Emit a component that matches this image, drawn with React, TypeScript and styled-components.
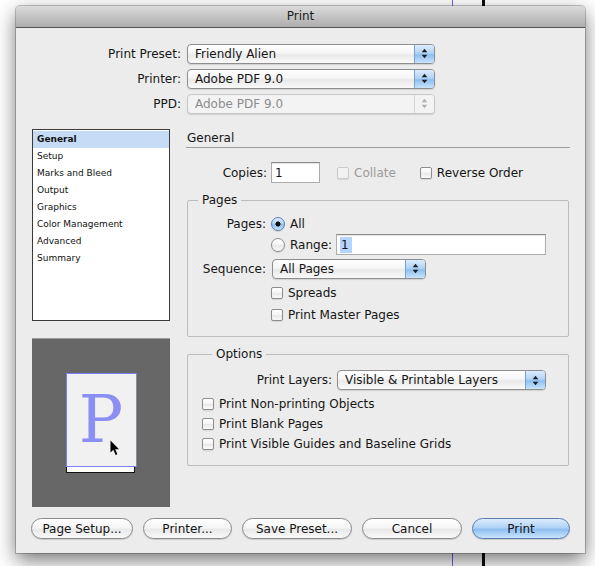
import React from 'react';
import styled, { createGlobalStyle } from 'styled-components';

const GlobalStyle = createGlobalStyle`
  html, body {
    margin: 0;
    padding: 0;
  }
  body {
    font-family: "DejaVu Sans", "Liberation Sans", sans-serif;
    font-size: 12px;
    color: #151515;
  }
`;

const aqua = 'linear-gradient(#dcecfd, #b0d3f6 45%, #8ebff0 55%, #c9e4fc)';
const glass = 'linear-gradient(#ffffff, #f5f5f5 45%, #e9e9e9 55%, #f9f9f9)';

const Arrows = ({ color }: { color: string }) => (
  <svg width='7' height='11' viewBox='0 0 7 11'>
    <path d='M3.5 0.8 L6.3 4.2 L0.7 4.2 Z' fill={color} />
    <path d='M0.7 6.8 L6.3 6.8 L3.5 10.2 Z' fill={color} />
  </svg>
);

const Cursor = () => (
  <CursorMark width='10' height='16' viewBox='0 0 10 16'>
    <path d='M0.5 0.5 L0.5 12.5 L3.4 9.8 L5.6 15 L7.4 14.2 L5.2 9.2 L9 9.2 Z' fill='#000' />
  </CursorMark>
);

const PopUp = ({ value, disabled, width }: { value: string; disabled?: boolean; width?: number }) => (
  <PopupBox $disabled={disabled} $width={width}>
    <PopupValue>{value}</PopupValue>
    <Stepper $disabled={disabled}>
      <Arrows color={disabled ? '#b0b0b0' : '#1c1c1c'} />
    </Stepper>
  </PopupBox>
);

const Check = ({ label, disabled }: { label: string; disabled?: boolean }) => (
  <CheckRow $disabled={disabled}>
    <CheckBox $disabled={disabled} />
    {label}
  </CheckRow>
);

const Radio = ({ label, checked }: { label: string; checked?: boolean }) => (
  <CheckRow>
    <RadioDot $checked={checked} />
    {label}
  </CheckRow>
);

const sections = [
  'General',
  'Setup',
  'Marks and Bleed',
  'Output',
  'Graphics',
  'Color Management',
  'Advanced',
  'Summary',
];

const App = () => {
  return (
    <Desk>
      <GlobalStyle />
      <Window>
        <TitleBar>Print</TitleBar>
        <Content>
          <Presets>
            <FormLabel>Print Preset:</FormLabel>
            <PopUp value='Friendly Alien' />
            <FormLabel>Printer:</FormLabel>
            <PopUp value='Adobe PDF 9.0' />
            <FormLabel>PPD:</FormLabel>
            <PopUp value='Adobe PDF 9.0' disabled />
          </Presets>

          <Main>
            <LeftColumn>
              <SectionList>
                {sections.map((name, i) => (
                  <SectionItem key={name} $selected={i === 0}>
                    {name}
                  </SectionItem>
                ))}
              </SectionList>
              <Preview>
                <Sheet>
                  <PageFace>
                    P
                    <Cursor />
                  </PageFace>
                  <PageBase />
                </Sheet>
              </Preview>
            </LeftColumn>

            <RightColumn>
              <PanelTitle>General</PanelTitle>
              <CopiesRow>
                <CopiesLabel>Copies:</CopiesLabel>
                <Field $width={49}>1</Field>
                <Spacer $width={17} />
                <Check label='Collate' disabled />
                <Spacer $width={24} />
                <Check label='Reverse Order' />
              </CopiesRow>

              <Group $pad='8px 0 11px 0' $gap={10}>
                <Legend>Pages</Legend>
                <PagesGrid>
                  <FormLabel>Pages:</FormLabel>
                  <Radio label='All' checked />
                  <span />
                  <RangeRow>
                    <Radio label='Range:' />
                    <Field $width={210}>
                      <Selected>1</Selected>
                    </Field>
                  </RangeRow>
                  <FormLabel>Sequence:</FormLabel>
                  <SequenceSlot>
                    <PopUp value='All Pages' width={154} />
                  </SequenceSlot>
                  <span />
                  <Check label='Spreads' />
                  <span />
                  <Check label='Print Master Pages' />
                </PagesGrid>
              </Group>

              <Group $pad='8px 0 11px 14px' $gap={10}>
                <Legend>Options</Legend>
                <LayersRow>
                  <FormLabel>Print Layers:</FormLabel>
                  <PopUp value={'Visible & Printable Layers'} width={209} />
                </LayersRow>
                <OptionList>
                  <Check label='Print Non-printing Objects' />
                  <Check label='Print Blank Pages' />
                  <Check label='Print Visible Guides and Baseline Grids' />
                </OptionList>
              </Group>
            </RightColumn>
          </Main>

          <Buttons>
            <PushButton $width={102}>Page Setup...</PushButton>
            <PushButton $width={89}>Printer...</PushButton>
            <PushButton $width={110}>Save Preset...</PushButton>
            <PushButton $width={100}>Cancel</PushButton>
            <PushButton $width={98} $default>
              Print
            </PushButton>
          </Buttons>
        </Content>
      </Window>
    </Desk>
  );
};

const Desk = styled.div`
  width: 595px;
  height: 566px;
  overflow: hidden;
  box-sizing: border-box;
  padding: 6px 0 0 16px;
  background-color: #ffffff;
  background-image: linear-gradient(
    to right,
    transparent 452px,
    #7b5cf2 452px,
    #7b5cf2 453px,
    transparent 453px,
    transparent 482px,
    #0d0d0d 482px,
    #0d0d0d 485px,
    transparent 485px
  );
`;

const Window = styled.div`
  width: 569px;
  height: 547px;
  display: flex;
  flex-direction: column;
  background: #ececec;
  border-radius: 4px 4px 0 0;
  box-shadow: 0 7px 20px rgba(0, 0, 0, 0.55), 0 0 0 1px rgba(0, 0, 0, 0.22);
`;

const TitleBar = styled.div`
  height: 21px;
  line-height: 21px;
  text-align: center;
  color: #202020;
  border-radius: 4px 4px 0 0;
  border-bottom: 1px solid #545454;
  background: linear-gradient(#dadada, #c2c2c2 55%, #adadad);
`;

const Content = styled.div`
  flex: 1;
  display: flex;
  flex-direction: column;
  padding: 16px 15px 0 16px;
`;

const Presets = styled.div`
  display: grid;
  grid-template-columns: 149px 248px;
  grid-auto-rows: 19px;
  column-gap: 6px;
  row-gap: 6px;
  align-items: center;
`;

const FormLabel = styled.span`
  text-align: right;
  white-space: nowrap;
`;

const PopupBox = styled.div<{ $disabled?: boolean; $width?: number }>`
  width: ${(p) => (p.$width ? `${p.$width}px` : 'auto')};
  height: 20px;
  box-sizing: border-box;
  display: flex;
  align-items: stretch;
  border: 1px solid ${(p) => (p.$disabled ? '#c6c6c6' : '#8e8e8e')};
  border-radius: 4px;
  background: ${(p) => (p.$disabled ? '#f3f3f3' : glass)};
  color: ${(p) => (p.$disabled ? '#8c8c8c' : '#151515')};
  box-shadow: 0 1px 1px rgba(0, 0, 0, 0.12);
  overflow: hidden;
`;

const PopupValue = styled.span`
  flex: 1;
  padding-left: 7px;
  line-height: 18px;
  white-space: nowrap;
`;

const Stepper = styled.span<{ $disabled?: boolean }>`
  width: 19px;
  display: flex;
  align-items: center;
  justify-content: center;
  border-left: 1px solid ${(p) => (p.$disabled ? '#d4d4d4' : '#7d9fcb')};
  background: ${(p) => (p.$disabled ? '#f3f3f3' : aqua)};
`;

const Main = styled.div`
  display: flex;
  gap: 16px;
  margin-top: 16px;
`;

const LeftColumn = styled.div`
  width: 138px;
  display: flex;
  flex-direction: column;
  gap: 17px;
`;

const SectionList = styled.ul`
  margin: 0;
  padding: 1px 0 0;
  list-style: none;
  height: 192px;
  box-sizing: border-box;
  border: 1px solid #3a3a3a;
  background: #ffffff;
`;

const SectionItem = styled.li<{ $selected?: boolean }>`
  height: 17px;
  line-height: 17px;
  padding-left: 4px;
  font-size: 9px;
  font-weight: ${(p) => (p.$selected ? 'bold' : 'normal')};
  background: ${(p) => (p.$selected ? '#c5dbf6' : 'transparent')};
  color: #111111;
`;

const Preview = styled.div`
  height: 169px;
  box-sizing: border-box;
  display: flex;
  justify-content: center;
  padding-top: 34px;
  background: #676767;
  border-top: 1px solid #9c9c9c;
`;

const Sheet = styled.div`
  width: 71px;
  display: flex;
  flex-direction: column;
`;

const PageFace = styled.div`
  position: relative;
  height: 94px;
  box-sizing: border-box;
  padding-top: 13px;
  text-align: center;
  background: #f1f1f1;
  border: 1px solid #7d7dff;
  border-right-color: #8c8c9c;
  font-family: "DejaVu Serif", "Liberation Serif", serif;
  font-size: 66px;
  line-height: 66px;
  color: #8b8ef2;
`;

const CursorMark = styled.svg`
  position: absolute;
  left: 43px;
  top: 66px;
`;

const PageBase = styled.div`
  width: 69px;
  height: 6px;
  box-sizing: border-box;
  background: #ffffff;
  border: 1px solid #111111;
  border-top: none;
`;

const RightColumn = styled.div`
  flex: 1;
  display: flex;
  flex-direction: column;
`;

const PanelTitle = styled.div`
  height: 19px;
  line-height: 19px;
  padding-left: 1px;
  box-sizing: border-box;
  border-bottom: 1px solid #9e9e9e;
`;

const CopiesRow = styled.div`
  display: flex;
  align-items: center;
  height: 21px;
  margin-top: 14px;
`;

const CopiesLabel = styled.span`
  width: 81px;
  padding-right: 4px;
  box-sizing: content-box;
  text-align: right;
`;

const Spacer = styled.span<{ $width: number }>`
  width: ${(p) => p.$width}px;
`;

const Field = styled.div<{ $width: number }>`
  width: ${(p) => p.$width}px;
  height: 21px;
  box-sizing: border-box;
  display: flex;
  align-items: center;
  padding-left: 3px;
  background: #ffffff;
  border: 1px solid #acacac;
  border-top-color: #8a8a8a;
  box-shadow: inset 0 1px 1px rgba(0, 0, 0, 0.12);
`;

const Selected = styled.span`
  background: #b4d4fd;
  padding: 1px 3px 1px 1px;
`;

const CheckRow = styled.span<{ $disabled?: boolean }>`
  display: inline-flex;
  align-items: center;
  gap: 5px;
  height: 20px;
  white-space: nowrap;
  color: ${(p) => (p.$disabled ? '#9a9a9a' : '#151515')};
`;

const CheckBox = styled.span<{ $disabled?: boolean }>`
  width: 12px;
  height: 12px;
  box-sizing: border-box;
  border-radius: 2px;
  border: 1px solid ${(p) => (p.$disabled ? '#cbcbcb' : '#8d8d8d')};
  background: ${(p) => (p.$disabled ? '#f2f2f2' : glass)};
  box-shadow: 0 1px 1px rgba(0, 0, 0, 0.1);
`;

const RadioDot = styled.span<{ $checked?: boolean }>`
  width: 14px;
  height: 14px;
  box-sizing: border-box;
  border-radius: 50%;
  border: 1px solid ${(p) => (p.$checked ? '#5b7eae' : '#8d8d8d')};
  background: ${(p) =>
    p.$checked
      ? 'radial-gradient(circle, #111 0 2.3px, transparent 2.8px), ' + aqua
      : glass};
  box-shadow: 0 1px 1px rgba(0, 0, 0, 0.12);
`;

const Group = styled.fieldset<{ $pad: string; $gap: number }>`
  margin: ${(p) => p.$gap}px 1px 0;
  padding: ${(p) => p.$pad};
  min-width: 0;
  border: 1px solid #bcbcbc;
  border-radius: 2px;
`;

const Legend = styled.legend`
  margin-left: 10px;
  padding: 0 4px;
  line-height: 14px;
`;

const PagesGrid = styled.div`
  display: grid;
  grid-template-columns: 78px 1fr;
  grid-template-rows: 17px 25px 23px 25px 20px;
  column-gap: 5px;
  align-items: center;
  justify-items: start;

  & > ${FormLabel} {
    justify-self: end;
  }
`;

const RangeRow = styled.div`
  display: flex;
  align-items: center;
  gap: 4px;
`;

const SequenceSlot = styled.div`
  margin-left: 1px;
`;

const LayersRow = styled.div`
  display: flex;
  justify-content: flex-end;
  align-items: center;
  gap: 5px;
  height: 22px;
  padding-right: 22px;
`;

const OptionList = styled.div`
  display: flex;
  flex-direction: column;
  margin-top: 3px;
`;

const Buttons = styled.div`
  display: flex;
  gap: 10px;
  margin: 11px 0 0 -1px;
`;

const PushButton = styled.button<{ $width: number; $default?: boolean }>`
  width: ${(p) => p.$width}px;
  height: 21px;
  padding: 0;
  font: inherit;
  color: #151515;
  border-radius: 11px;
  border: 1px solid ${(p) => (p.$default ? '#5a7cad' : '#8a8a8a')};
  background: ${(p) => (p.$default ? aqua : glass)};
  box-shadow: 0 1px 1px rgba(0, 0, 0, 0.15);
`;

export default App;
